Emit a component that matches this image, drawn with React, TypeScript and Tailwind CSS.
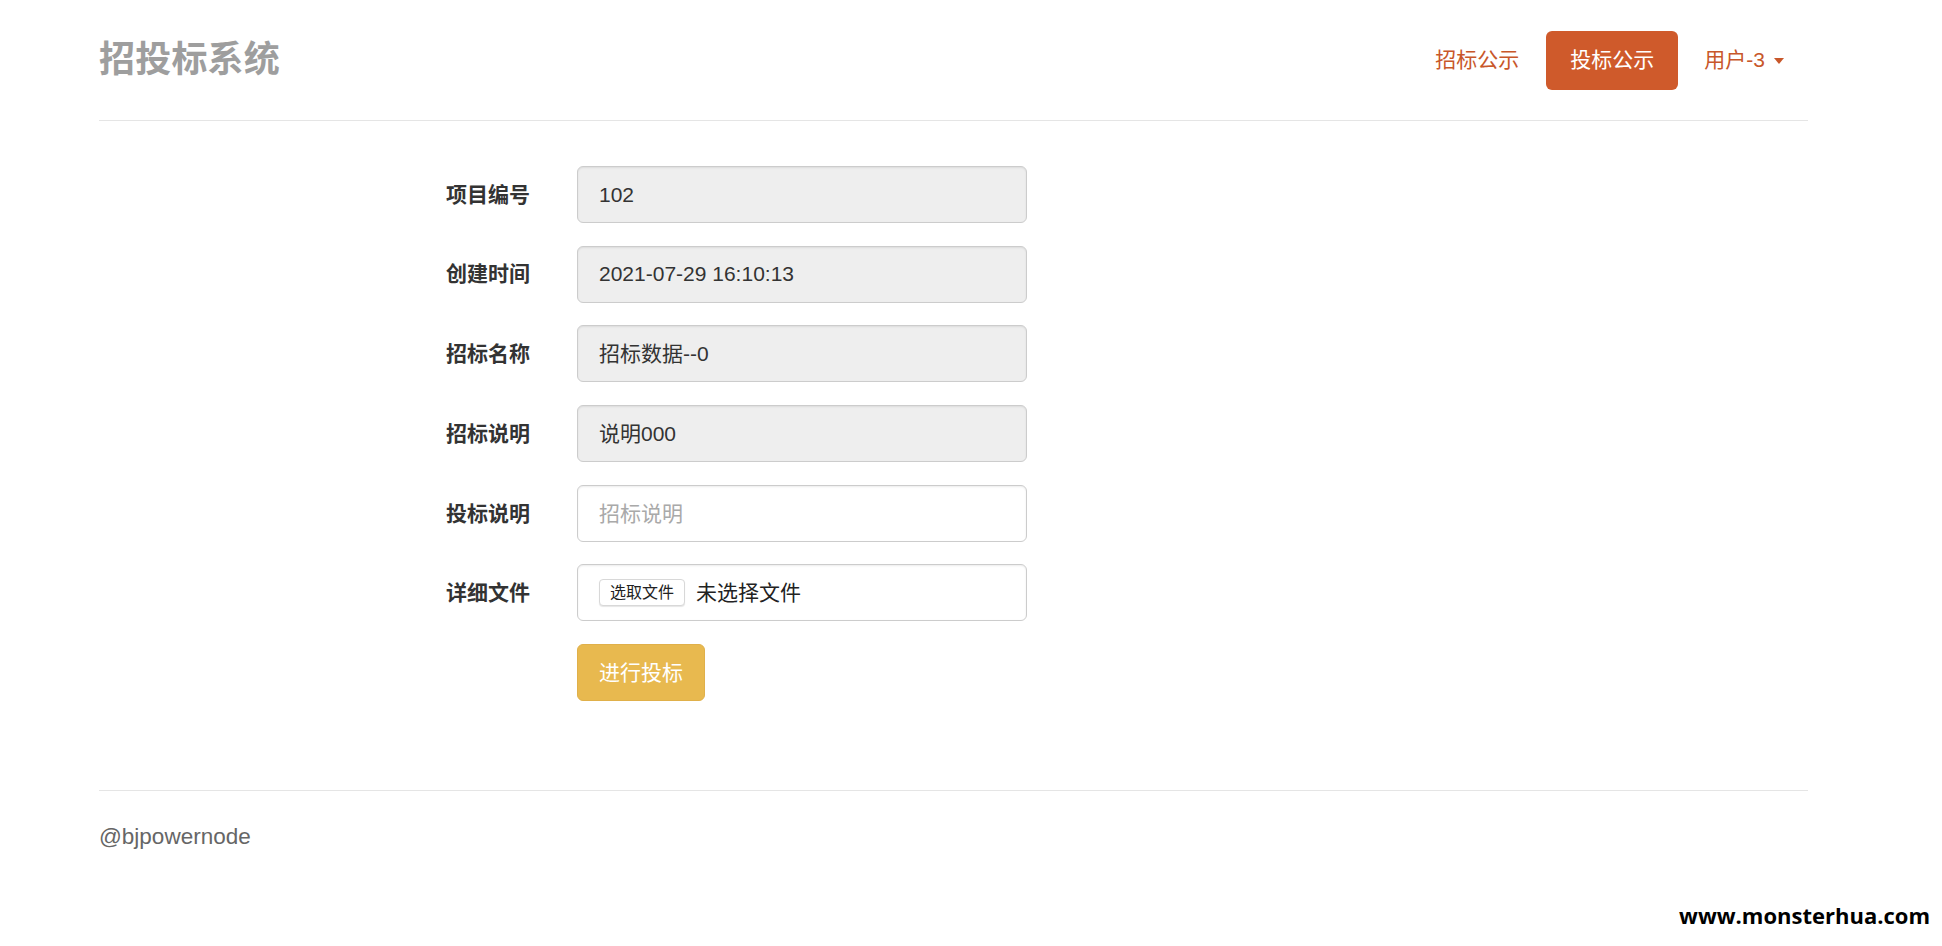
const FIELDS = [
  { label: '项目编号', value: '102' },
  { label: '创建时间', value: '2021-07-29 16:10:13' },
  { label: '招标名称', value: '招标数据--0' },
  { label: '招标说明', value: '说明000' },
]

const font = 'font-["Liberation_Sans","Noto_Sans_CJK_SC",sans-serif]'

function Label({ children }: { children: string }) {
  return <div className="w-[433px] shrink-0 pr-[2px] text-right text-[21px] font-bold text-[#333]">{children}</div>
}

export default function App() {
  return (
    <div className={`relative min-h-[946px] bg-white ${font}`}>
      <div className="ml-[99px] w-[1709px]">
        {/* header */}
        <header className="flex h-[121px] items-center justify-between border-b border-[#e5e5e5]">
          <h3 className="text-[36px] font-bold tracking-[0.2px] text-[#9e9e9e]">招投标系统</h3>
          <nav className="flex items-center text-[21px]">
            <a className="flex h-[59px] items-center rounded-[6px] px-[27px] text-[#c8572a]">招标公示</a>
            <a className="flex h-[59px] items-center rounded-[6px] bg-[#cf5a2b] px-[24px] text-white">投标公示</a>
            <a className="ml-[2px] flex h-[59px] items-center rounded-[6px] pl-[24px] pr-[24px] text-[#c8572a]">
              用户-3
              <span className="ml-[9px] mt-[2px] h-0 w-0 border-x-[5px] border-t-[6px] border-x-transparent border-t-[#c8572a]" />
            </a>
          </nav>
        </header>

        {/* form */}
        <form className="flex flex-col gap-[22.7px] pt-[45px]">
          {FIELDS.map((f) => (
            <div key={f.label} className="flex items-center gap-[45px]">
              <Label>{f.label}</Label>
              <div className="flex h-[57px] w-[450px] items-center rounded-[6px] border border-[#cccccc] bg-[#eeeeee] px-[21px] text-[21px] text-[#333] shadow-[inset_0_1px_2px_rgba(0,0,0,0.08)]">
                {f.value}
              </div>
            </div>
          ))}
          <div className="flex items-center gap-[45px]">
            <Label>投标说明</Label>
            <div className="flex h-[57px] w-[450px] items-center rounded-[6px] border border-[#cccccc] bg-white px-[21px] text-[21px] text-[#a9a9a9] shadow-[inset_0_1px_2px_rgba(0,0,0,0.08)]">
              招标说明
            </div>
          </div>
          <div className="flex items-center gap-[45px]">
            <Label>详细文件</Label>
            <div className="flex h-[57px] w-[450px] items-center rounded-[6px] border border-[#cccccc] bg-white px-[21px] shadow-[inset_0_1px_2px_rgba(0,0,0,0.08)]">
              <span className="flex h-[27px] items-center rounded-[4px] border border-[#d8d8d8] bg-white px-[10px] text-[16px] text-[#222] shadow-[0_1px_1px_rgba(0,0,0,0.1)]">
                选取文件
              </span>
              <span className="ml-[11px] text-[21px] text-[#222]">未选择文件</span>
            </div>
          </div>
          <div className="flex items-center gap-[45px]">
            <div className="w-[433px] shrink-0" />
            <button
              type="button"
              className="flex h-[57px] w-[128px] items-center justify-center rounded-[6px] border border-[#e0b04a] bg-[#e8b94f] text-[21px] text-white"
            >
              进行投标
            </button>
          </div>
        </form>

        {/* footer */}
        <footer className="mt-[89px] border-t border-[#e5e5e5] pt-[29px]">
          <p className="text-[22.5px] text-[#666]">@bjpowernode</p>
        </footer>
      </div>

      <div className='absolute bottom-[14px] right-[12px] font-["Open_Sans",sans-serif] text-[22px] font-bold text-black'>
        www.monsterhua.com
      </div>
    </div>
  )
}
